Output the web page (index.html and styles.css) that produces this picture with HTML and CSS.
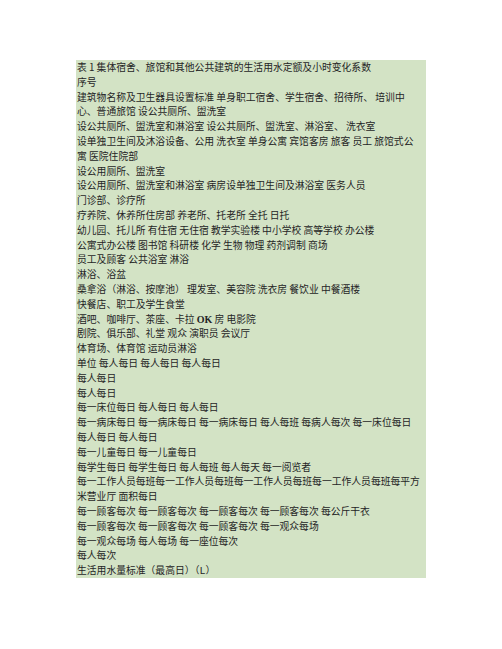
FILE: index.html
```html
<!DOCTYPE html>
<html lang="zh-CN">
<head>
<meta charset="utf-8">
<title>表 1</title>
<link rel="stylesheet" href="styles.css">
</head>
<body>
<div class="sheet">
<div class="ln">表 1 集体宿舍、旅馆和其他公共建筑的生活用水定额及小时变化系数</div>
<div class="ln">序号</div>
<div class="ln">建筑物名称及卫生器具设置标准 单身职工宿舍、学生宿舍、招待所、 培训中</div>
<div class="ln">心、普通旅馆 设公共厕所、盥洗室</div>
<div class="ln">设公共厕所、盥洗室和淋浴室 设公共厕所、盥洗室、淋浴室、 洗衣室</div>
<div class="ln">设单独卫生间及沐浴设备、公用 洗衣室 单身公寓 宾馆客房 旅客 员工 旅馆式公</div>
<div class="ln">寓 医院住院部</div>
<div class="ln">设公用厕所、盥洗室</div>
<div class="ln">设公用厕所、盥洗室和淋浴室 病房设单独卫生间及淋浴室 医务人员</div>
<div class="ln">门诊部、诊疗所</div>
<div class="ln">疗养院、休养所住房部 养老所、托老所 全托 日托</div>
<div class="ln">幼儿园、托儿所 有住宿 无住宿 教学实验楼 中小学校 高等学校 办公楼</div>
<div class="ln">公寓式办公楼 图书馆 科研楼 化学 生物 物理 药剂调制 商场</div>
<div class="ln">员工及顾客 公共浴室 淋浴</div>
<div class="ln">淋浴、浴盆</div>
<div class="ln">桑拿浴（淋浴、按摩池） 理发室、美容院 洗衣房 餐饮业 中餐酒楼</div>
<div class="ln">快餐店、职工及学生食堂</div>
<div class="ln">酒吧、咖啡厅、茶座、卡拉 <span class="latin">OK</span> 房 电影院</div>
<div class="ln">剧院、俱乐部、礼堂 观众 演职员 会议厅</div>
<div class="ln">体育场、体育馆 运动员淋浴</div>
<div class="ln">单位 每人每日 每人每日 每人每日</div>
<div class="ln">每人每日</div>
<div class="ln">每人每日</div>
<div class="ln">每一床位每日 每人每日 每人每日</div>
<div class="ln">每一病床每日 每一病床每日 每一病床每日 每人每班 每病人每次 每一床位每日</div>
<div class="ln">每人每日 每人每日</div>
<div class="ln">每一儿童每日 每一儿童每日</div>
<div class="ln">每学生每日 每学生每日 每人每班 每人每天 每一阅览者</div>
<div class="ln">每一工作人员每班每一工作人员每班每一工作人员每班每一工作人员每班每平方</div>
<div class="ln">米营业厅 面积每日</div>
<div class="ln">每一顾客每次 每一顾客每次 每一顾客每次 每一顾客每次 每公斤干衣</div>
<div class="ln">每一顾客每次 每一顾客每次 每一顾客每次 每一观众每场</div>
<div class="ln">每一观众每场 每人每场 每一座位每次</div>
<div class="ln">每人每次</div>
<div class="ln">生活用水量标准（最高日）（<span class="mono">L</span>）</div>
</div>
</body>
</html>
```
FILE: styles.css
```css
html, body {
  margin: 0;
  padding: 0;
  background: #ffffff;
}
body {
  padding: 60px 0 0 76px;
}
.sheet {
  width: 350px;
  background: #d3e3c5;
  color: #252525;
  font-family: "Noto Sans CJK SC", "Noto Sans", sans-serif;
  font-size: 9.8px;
  line-height: 14.8px;
  padding: 0 0 0 1px;
  box-sizing: border-box;
}
.ln {
  white-space: nowrap;
  height: 14.8px;
}
.latin {
  font-family: "Liberation Serif", serif;
  font-weight: bold;
  font-size: 10px;
}
.mono {
  font-family: "Liberation Mono", monospace;
  font-size: 10px;
}
```
